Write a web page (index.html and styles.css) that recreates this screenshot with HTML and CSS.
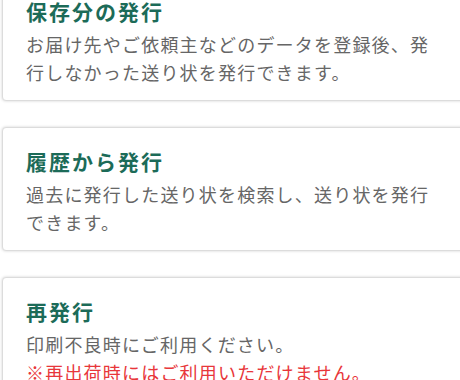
FILE: index.html
```html
<!DOCTYPE html>
<html lang="ja">
<head>
<meta charset="utf-8">
<link rel="stylesheet" href="styles.css">
</head>
<body>
<div class="list">
  <section class="card">
    <h2 class="title">保存分の発行</h2>
    <p class="desc">お届け先やご依頼主などのデータを登録後、発行しなかった送り状を発行できます。</p>
  </section>
  <section class="card">
    <h2 class="title">履歴から発行</h2>
    <p class="desc">過去に発行した送り状を検索し、送り状を発行できます。</p>
  </section>
  <section class="card">
    <h2 class="title">再発行</h2>
    <p class="desc">印刷不良時にご利用ください。<br><span class="warn">※再出荷時にはご利用いただけません。</span></p>
  </section>
</div>
</body>
</html>
```
FILE: styles.css
```css
html, body {
  margin: 0;
  padding: 0;
  background: #ffffff;
  overflow: hidden;
}
body {
  font-family: "Noto Sans CJK JP", "Noto Sans", sans-serif;
}
.list {
  display: flex;
  flex-direction: column;
  gap: 26px;
  margin-top: -23px;
  padding-left: 2px;
  width: 480px;
}
.card {
  background: #fff;
  border: 1px solid #dcdcdc;
  border-radius: 4px;
  box-shadow: 0 0 3px rgba(0, 0, 0, 0.18);
  padding: 20px 24px 14px 23px;
}
.title {
  margin: 0 0 6px 0;
  font-size: 21px;
  line-height: 26px;
  font-weight: bold;
  letter-spacing: 2px;
  color: #1c6b58;
}
.desc {
  margin: 0;
  width: 410px;
  font-size: 18px;
  line-height: 28px;
  letter-spacing: 1.2px;
  color: #666666;
}
.warn {
  color: #e8363a;
}
```
